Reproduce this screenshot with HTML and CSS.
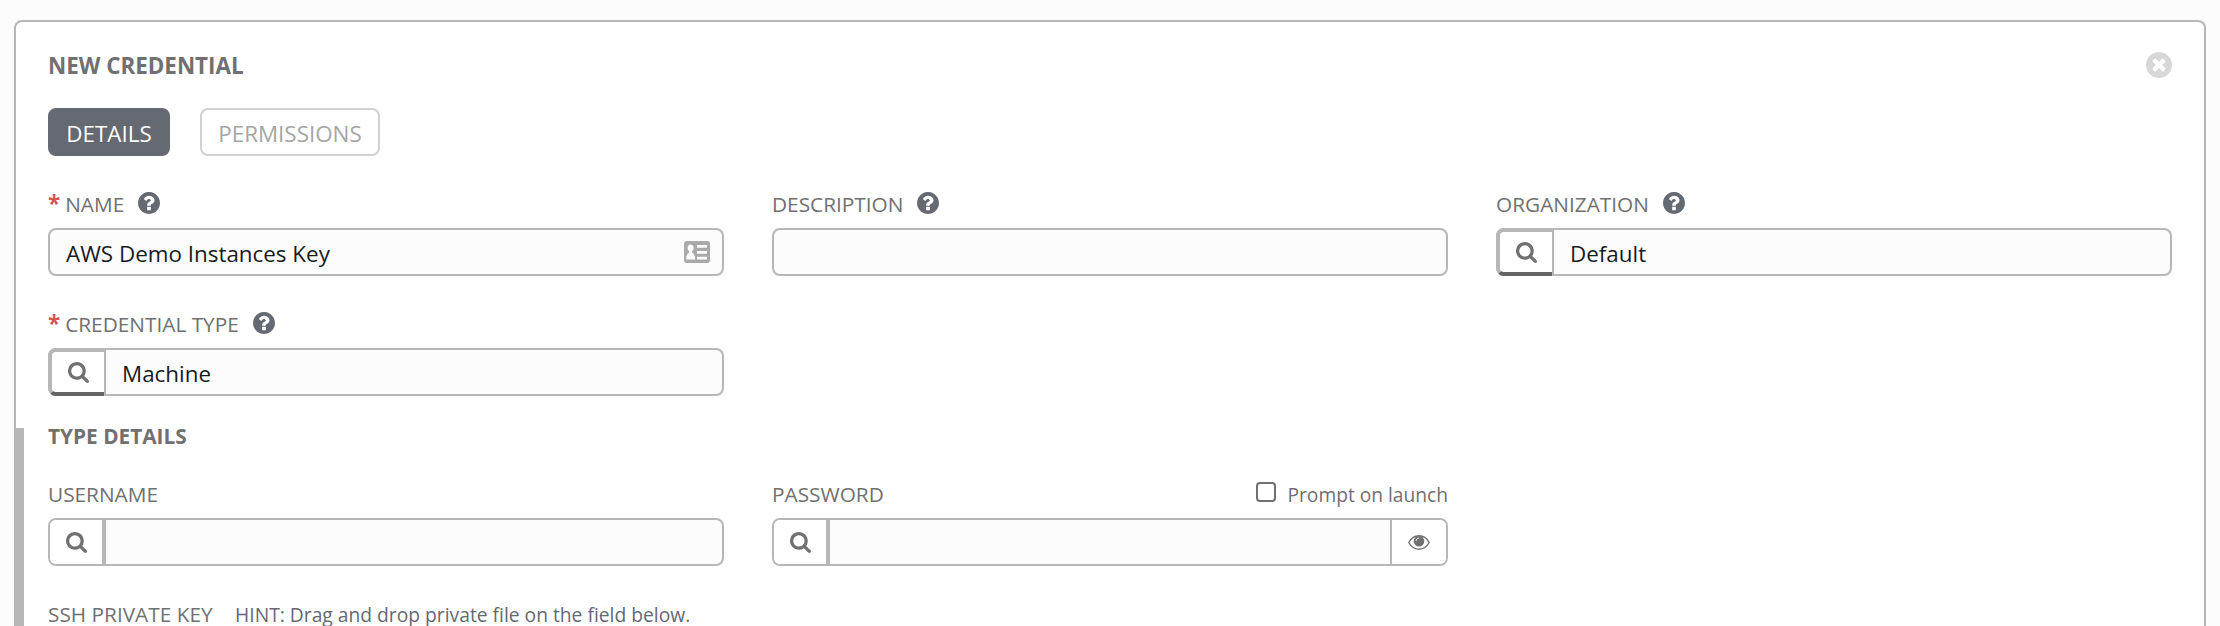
FILE: index.html
```html
<!DOCTYPE html>
<html lang="en">
<head>
<meta charset="utf-8">
<title>New Credential</title>
<link rel="stylesheet" href="styles.css">
</head>
<body>
<svg class="sprite" aria-hidden="true">
  <symbol id="help" viewBox="128 128 1536 1536"><path d="M1024 1376v-192q0-14-9-23t-23-9h-192q-14 0-23 9t-9 23v192q0 14 9 23t23 9h192q14 0 23-9t9-23zm256-672q0-88-55.5-163t-138.5-116-170-41q-243 0-371 213-15 24 8 42l132 100q7 6 19 6 16 0 25-12 53-68 86-92 34-24 86-24 48 0 85.5 26t37.5 59q0 38-20 61t-68 45q-63 28-115.5 86.5t-52.5 125.5v36q0 14 9 23t23 9h192q14 0 23-9t9-23q0-19 21.5-49.5t54.5-49.5q32-18 49-28.5t46-35 44.5-48 28-60.5 12.5-81zm384 192q0 209-103 385.5t-279.5 279.5-385.5 103-385.5-103-279.5-279.5-103-385.5 103-385.5 279.5-279.5 385.5-103 385.5 103 279.5 279.5 103 385.5z"/></symbol>
  <symbol id="close" viewBox="128 128 1536 1536"><path d="M1277 1122q0-26-19-45l-181-181 181-181q19-19 19-45 0-27-19-46l-90-90q-19-19-46-19-26 0-45 19l-181 181-181-181q-19-19-45-19-27 0-46 19l-90 90q-19 19-19 46 0 26 19 45l181 181-181 181q-19 19-19 45 0 27 19 46l90 90q19 19 46 19 26 0 45-19l181-181 181 181q19 19 45 19 27 0 46-19l90-90q19-19 19-46zm387-226q0 209-103 385.5t-279.5 279.5-385.5 103-385.5-103-279.5-279.5-103-385.5 103-385.5 279.5-279.5 385.5-103 385.5 103 279.5 279.5 103 385.5z"/></symbol>
  <symbol id="search" viewBox="64 128 1664 1664"><path d="M1216 832q0-185-131.5-316.5t-316.5-131.5-316.5 131.5-131.5 316.5 131.5 316.5 316.5 131.5 316.5-131.5 131.5-316.5zm512 832q0 52-38 90t-90 38q-54 0-90-38l-343-342q-179 124-399 124-143 0-273.5-55.5t-225-150-150-225-55.5-273.5 55.5-273.5 150-225 225-150 273.5-55.5 273.5 55.5 225 150 150 225 55.5 273.5q0 220-124 399l343 343q37 37 37 90z"/></symbol>
</svg>
<main class="panel">
  <header class="header">
    <h1 class="title">NEW CREDENTIAL</h1>
    <svg class="close"><use href="#close"/></svg>
  </header>
  <nav class="tabs">
    <span class="tab tab-active">DETAILS</span>
    <span class="tab">PERMISSIONS</span>
  </nav>
  <form class="grid">
    <div class="field">
      <div class="label"><b class="star">*</b><span class="text">NAME</span><svg class="help"><use href="#help"/></svg></div>
      <div class="input"><span class="value">AWS Demo Instances Key</span>
        <svg class="card" viewBox="0 0 26 22"><path fill-rule="evenodd" d="M3 0h20a3 3 0 0 1 3 3v16a3 3 0 0 1-3 3H3a3 3 0 0 1-3-3V3a3 3 0 0 1 3-3zM6.600 3.500a3 3.400 0 0 0-2 6q.7 1 .7 2Q2 13 2 18.500h9.200q0-5.500-3.300-7 0-1 .7-2a3 3.400 0 0 0-2-6zM13 4v2.700h10V4zM13 10v2.700h10V10zM13 15.800v2.700h10v-2.700z"/></svg>
      </div>
    </div>
    <div class="field">
      <div class="label"><span class="text">DESCRIPTION</span><svg class="help"><use href="#help"/></svg></div>
      <div class="input"></div>
    </div>
    <div class="field">
      <div class="label"><span class="text">ORGANIZATION</span><svg class="help"><use href="#help"/></svg></div>
      <div class="input input-lookup"><span class="lookup-raised"><svg class="search"><use href="#search"/></svg></span><span class="value">Default</span></div>
    </div>
    <div class="field">
      <div class="label"><b class="star">*</b><span class="text">CREDENTIAL TYPE</span><svg class="help"><use href="#help"/></svg></div>
      <div class="input input-lookup"><span class="lookup-raised"><svg class="search"><use href="#search"/></svg></span><span class="value">Machine</span></div>
    </div>
  </form>
  <section class="subform">
    <h2 class="subtitle">TYPE DETAILS</h2>
    <div class="grid">
      <div class="field">
        <div class="label"><span class="text">USERNAME</span></div>
        <div class="input"><span class="lookup"><svg class="search"><use href="#search"/></svg></span></div>
      </div>
      <div class="field">
        <div class="label"><span class="text">PASSWORD</span><span class="prompt"><i class="checkbox"></i><span class="prompt-text">Prompt on launch</span></span></div>
        <div class="input"><span class="lookup"><svg class="search"><use href="#search"/></svg></span>
          <span class="reveal"><svg class="eye" viewBox="0 0 22 15"><path fill="none" stroke="currentColor" stroke-width="1.400" d="M.8 7.500Q4.500.8 11 .8t10.200 6.700Q17.500 14.200 11 14.200T.8 7.500z"/><circle cx="11" cy="6.200" r="5.300"/><path fill="none" stroke="#fff" stroke-width="1" stroke-linecap="round" d="M8 5.500Q8.300 3.300 10.500 3"/></svg></span>
        </div>
      </div>
    </div>
    <div class="key-label"><span>SSH PRIVATE KEY</span><span class="hint">HINT: Drag and drop private file on the field below.</span></div>
  </section>
</main>
</body>
</html>
```
FILE: styles.css
```css
* { box-sizing: border-box; }
body {
  margin: 0;
  height: 626px;
  overflow: hidden;
  padding: 20px 14px 0;
  background: #fcfcfc;
  font-family: "Open Sans", "Noto Sans", sans-serif;
  color: #707070;
}
svg { display: block; fill: currentColor; flex: none; }
.sprite { position: absolute; width: 0; height: 0; }
.panel {
  display: flex;
  flex-direction: column;
  height: 606px;
  border: 2px solid #b7b7b7;
  border-bottom: 0;
  border-radius: 8px 8px 0 0;
  background: #fff;
}
.header {
  display: flex;
  flex: none;
  justify-content: space-between;
  align-items: center;
  height: 86px;
  padding: 0 32px;
}
.title { margin: 0; padding-top: 2px; font-size: 22.4px; line-height: 30px; }
.close { width: 26px; height: 26px; color: #d7d7d7; }
.tabs { display: flex; flex: none; gap: 30px; padding: 0 32px; }
.tab {
  width: 180px;
  height: 48px;
  border: 2px solid #d1d1d1;
  border-radius: 8px;
  font-size: 22.4px;
  line-height: 47px;
  text-align: center;
  color: #a5a5a5;
}
.tab-active { width: 122px; background: #646972; border-color: #646972; color: #fff; }
.grid {
  display: grid;
  flex: none;
  grid-template-columns: repeat(3, 676px);
  column-gap: 48px;
  row-gap: 32px;
  padding: 0 32px;
}
form.grid { margin-top: 32px; }
.label {
  display: flex;
  align-items: center;
  height: 30px;
  margin-bottom: 10px;
  font-size: 20.8px;
  line-height: 28px;
  white-space: nowrap;
}
.text { padding-top: 2px; }
.star { width: 17.2px; padding-top: 2px; color: #d9534f; font-size: 22.4px; }
.help { width: 22px; height: 22px; margin-left: 14px; color: #646972; }
.input {
  display: flex;
  align-items: center;
  height: 48px;
  border: 2px solid #b7b7b7;
  border-radius: 8px;
  background: #fcfcfc;
  overflow: hidden;
}
.input-lookup { overflow: visible; }
.value {
  flex: 1;
  height: 44px;
  padding: 2px 0 0 16px;
  font-size: 22.4px;
  line-height: 44px;
  color: #161b1f;
}
.input-lookup .value { border-left: 2px solid #b7b7b7; }
.card { width: 26px; height: 22px; margin-right: 12px; color: #a9a9a9; }
.lookup {
  display: flex;
  align-items: center;
  justify-content: center;
  width: 56px;
  height: 44px;
  border-right: 4px solid #b7b7b7;
  background: #fff;
}
.lookup-raised {
  display: flex;
  align-items: center;
  justify-content: center;
  width: 56px;
  height: 48px;
  margin: -2px 0 -2px -2px;
  border: 4px solid #b7b7b7;
  border-right: 0;
  border-bottom-color: #646464;
  border-radius: 8px 0 0 8px;
  background: #fff;
}
.search { width: 21px; height: 21px; }
.subform { flex: 1; margin: 32px 0 0 -2px; border-left: 10px solid #b7b7b7; }
.subform .grid { padding: 0 24px; }
.subtitle { margin: 0 24px; font-size: 20.8px; line-height: 16px; padding-bottom: 34px; }
.prompt { display: flex; align-items: center; gap: 11px; margin-left: auto; font-size: 19.2px; }
.prompt-text { padding-top: 3px; }
.checkbox { width: 20px; height: 20px; margin-top: -2px; border: 2px solid #707070; border-radius: 4px; background: #fff; }
.reveal {
  display: flex;
  align-items: center;
  justify-content: center;
  width: 56px;
  height: 44px;
  margin-left: auto;
  border-left: 2px solid #b7b7b7;
  background: #fff;
}
.eye { width: 22px; height: 15px; }
.key-label {
  display: flex;
  align-items: baseline;
  margin: 35px 24px 0;
  font-size: 20.8px;
  line-height: 26px;
  white-space: nowrap;
}
.hint { margin-left: 22.5px; font-size: 19.25px; color: #646972; }
```
